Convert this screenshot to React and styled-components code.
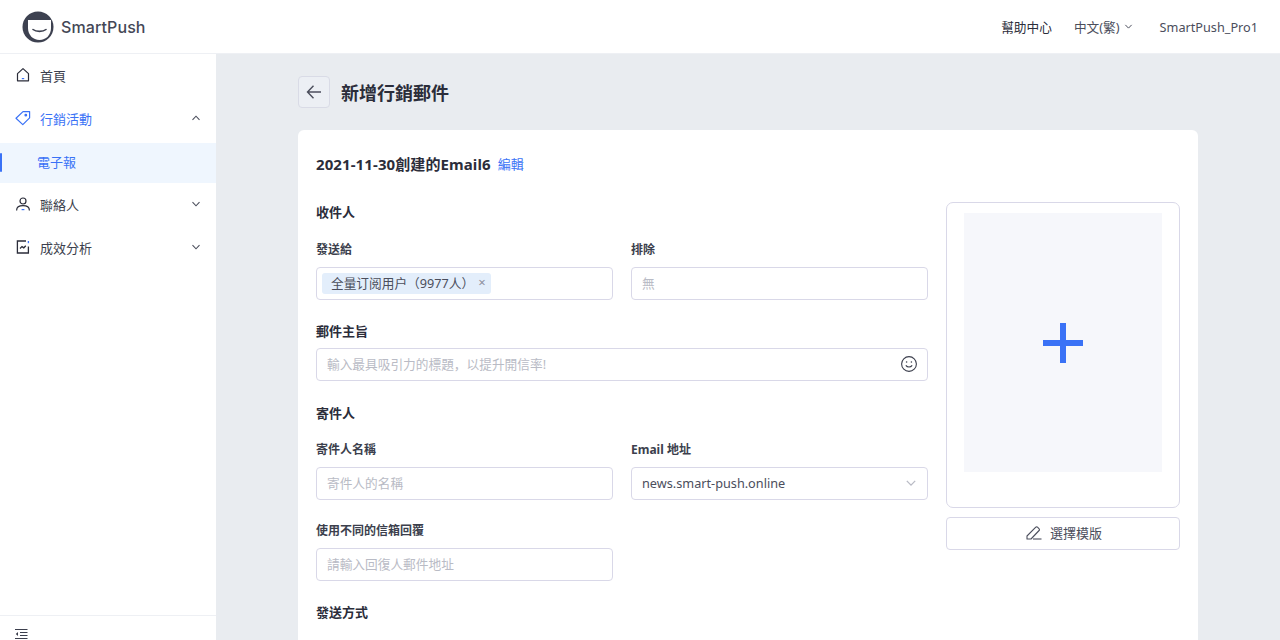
import React from "react";
import styled, { createGlobalStyle } from "styled-components";

const Global = createGlobalStyle`
  html, body {
    margin: 0;
    height: 640px;
    overflow: hidden;
    background: #e9ecf0;
    font-family: "Noto Sans", "Noto Sans CJK SC", sans-serif;
    color: #2b2d3a;
  }
  * { box-sizing: border-box; }
`;

const Header = styled.header`
  height: 54px;
  background: #fff;
  border-bottom: 1px solid #eef0f4;
  display: flex;
  align-items: center;
  justify-content: space-between;
  padding: 0 22px;
`;

const Brand = styled.div`
  display: flex;
  align-items: center;
  gap: 7px;
  font-family: Inter, sans-serif;
  font-size: 16px;
  font-weight: 500;
  letter-spacing: 0.1px;
  color: #444756;
`;

const TopNav = styled.nav`
  display: flex;
  align-items: center;
  font-size: 12.7px;
  color: #4b4e5c;
`;

const TopLink = styled.span`
  display: flex;
  align-items: center;
  gap: 4px;
  margin-left: ${(p) => p.$gap || 0}px;
  color: ${(p) => (p.$dark ? "#2b2d3a" : "#4b4e5c")};
`;

const Body = styled.div`
  display: flex;
  height: 586px;
`;

const Sidebar = styled.aside`
  width: 216px;
  flex: none;
  background: #fff;
  display: flex;
  flex-direction: column;
  padding-top: 3px;
`;

const Menu = styled.ul`
  list-style: none;
  margin: 0;
  padding: 0;
  flex: 1;
  display: flex;
  flex-direction: column;
  gap: 3px;
`;

const MenuItem = styled.li`
  position: relative;
  height: 40px;
  display: flex;
  align-items: center;
  gap: 9px;
  padding: 0 15px 4px;
  font-size: 13px;
  color: ${(p) => (p.$active ? "#3a72f6" : "#3c3f4d")};
  background: ${(p) => (p.$selected ? "#eff6fe" : "transparent")};
  padding-left: ${(p) => (p.$selected ? "37px" : "15px")};

  ${(p) => p.$selected && `
    &::before {
      content: "";
      position: absolute;
      left: 0;
      top: 10px;
      width: 2px;
      height: 19px;
      border-radius: 1px;
      background: #3a72f6;
    }
  `}
`;

const MenuLabel = styled.span`
  flex: 1;
`;

const SideFooter = styled.div`
  height: 25px;
  display: flex;
  align-items: flex-start;
  border-top: 1px solid #eef0f4;
  padding: 13px 0 0 15px;
  overflow: hidden;
`;

const Main = styled.main`
  flex: 1;
  padding: 22px 82px 0;
  overflow: hidden;
`;

const PageHead = styled.div`
  display: flex;
  align-items: center;
  gap: 11px;
  margin-bottom: 22px;
`;

const BackButton = styled.button`
  width: 32px;
  height: 32px;
  padding: 0;
  display: flex;
  align-items: center;
  justify-content: center;
  background: #eceff4;
  border: 1px solid #d9dbe6;
  border-radius: 4px;
`;

const PageTitle = styled.h1`
  margin: 0;
  font-size: 18px;
  font-weight: 700;
  color: #2b2d3a;
`;

const Card = styled.section`
  background: #fff;
  border-radius: 6px 6px 0 0;
  padding: 23px 18px 0;
  height: 520px;
`;

const EmailName = styled.div`
  display: flex;
  align-items: center;
  gap: 7px;
  height: 20px;
  font-size: 15px;
  font-weight: 700;
  letter-spacing: 0.1px;
  margin-bottom: 29px;
`;

const EditLink = styled.a`
  font-size: 13px;
  font-weight: 400;
  letter-spacing: 0;
  color: #3a72f6;
`;

const Columns = styled.div`
  display: grid;
  grid-template-columns: 612px 234px;
  column-gap: 18px;
`;

const Form = styled.div`
  display: flex;
  flex-direction: column;
`;

const SectionTitle = styled.div`
  height: 20px;
  line-height: 20px;
  font-size: 13px;
  font-weight: 700;
  margin-top: ${(p) => p.$top || 0}px;
  margin-bottom: ${(p) => p.$bottom || 0}px;
`;

const Row = styled.div`
  display: grid;
  grid-template-columns: 297px 297px;
  column-gap: 18px;
`;

const Label = styled.div`
  height: 18px;
  line-height: 20px;
  font-size: 12px;
  font-weight: 700;
  color: #3c3f4d;
  margin-top: ${(p) => p.$top || 0}px;
  margin-bottom: 9px;
`;

const InputBox = styled.div`
  height: 33px;
  display: flex;
  align-items: center;
  justify-content: space-between;
  padding: 0 10px 2px;
  background: #fff;
  border: 1px solid #d9d8e8;
  border-radius: 4px;
  font-size: 12.7px;
  color: ${(p) => (p.$filled ? "#4b4e5c" : "#b9bbc5")};
`;

const TagBox = styled(InputBox)`
  justify-content: flex-start;
  padding: 0 5px;
`;

const Tag = styled.span`
  height: 21px;
  display: flex;
  align-items: center;
  gap: 4px;
  padding: 0 5px 2px 9px;
  border-radius: 3px;
  background: #e3eefb;
  color: #4b4e5c;
  font-size: 12.7px;
`;

const TagClose = styled.span`
  color: #8d909c;
  font-size: 13px;
  line-height: 1;
`;

const Preview = styled.aside`
  display: flex;
  flex-direction: column;
  gap: 9px;
`;

const PreviewFrame = styled.div`
  height: 306px;
  padding: 10px 17px 0;
  border: 1px solid #d9d8e8;
  border-radius: 7px;
`;

const PreviewSheet = styled.div`
  height: 259px;
  background: #f6f7fb;
  display: flex;
  align-items: center;
  justify-content: center;
`;

const TemplateButton = styled.button`
  height: 33px;
  display: flex;
  align-items: center;
  justify-content: center;
  gap: 8px;
  padding: 0 0 2px 2px;
  background: #fff;
  border: 1px solid #d9d8e8;
  border-radius: 4px;
  font: inherit;
  font-size: 13px;
  color: #4b4e5c;
`;

const Chevron = ({ up, size = 10, color = "#4b4e5c" }) => (
  <svg width={size} height={size} viewBox="0 0 10 10" fill="none" stroke={color} strokeWidth="1.1">
    <path d={up ? "M1.5 6.8 5 3.2l3.5 3.6" : "M1.5 3.2 5 6.8l3.5-3.6"} />
  </svg>
);

const Logo = () => (
  <svg width="32" height="32" viewBox="0 0 32 32">
    <circle cx="16" cy="16" r="15.5" fill="#3d4150" />
    <path d="M6 9h23v8c0 7-5 12-11.5 12S6 24 6 17z" fill="#fff" />
    <path d="M11 18.5c3 2.5 10 2.5 13 0" fill="none" stroke="#3d4150" strokeWidth="1.6" strokeLinecap="round" />
  </svg>
);

const HomeIcon = () => (
  <svg width="16" height="16" viewBox="0 0 16 16" fill="none" stroke="#2b2d3a" strokeWidth="1.2" strokeLinejoin="round">
    <path d="M8 1.6 2.5 6.6v7.2h11V6.6z" />
    <path d="M6.8 11.6h2.4" stroke="#3a72f6" />
  </svg>
);

const TagIcon = () => (
  <svg width="16" height="16" viewBox="0 0 16 16" fill="none" stroke="#3a72f6" strokeWidth="1.2" strokeLinejoin="round">
    <path d="M1 8.2 8 1.6h6.6v6.2L7.8 14.6z" />
    <circle cx="10.8" cy="5.2" r=".8" fill="#3a72f6" />
  </svg>
);

const UserIcon = () => (
  <svg width="16" height="16" viewBox="0 0 16 16" fill="none" stroke="#2b2d3a" strokeWidth="1.2">
    <circle cx="8" cy="5" r="3" />
    <path d="M1.6 14.4c0-3 2.6-4.8 6.4-4.8s6.4 1.8 6.4 4.8" />
    <path d="M6.6 13.6h2.8" stroke="#3a72f6" />
  </svg>
);

const ChartIcon = () => (
  <svg width="16" height="16" viewBox="0 0 16 16" fill="none" stroke="#2b2d3a" strokeWidth="1.3">
    <path d="M11 2H2.4v12h11V7.4" />
    <path d="M5 9.4 7 7.6l1.8 1.2 2-2" />
    <path d="M13.4 2v2.2" stroke="#3a72f6" />
  </svg>
);

const CollapseIcon = () => (
  <svg width="13" height="10" viewBox="0 0 13 10" fill="none" stroke="#3c3f4d" strokeWidth="1">
    <path d="M0 .5h12.5M5 3.5h7.5M5 6.5h7.5M0 9.5h12.5" />
    <path d="M3 3v4L.8 5z" fill="#3c3f4d" stroke="none" />
  </svg>
);

const BackIcon = () => (
  <svg width="16" height="16" viewBox="0 0 16 16" fill="none" stroke="#4b4e5c" strokeWidth="1.4">
    <path d="M15 8H1.5M7.5 1.8 1.5 8l6 6.2" />
  </svg>
);

const SmileIcon = () => (
  <svg width="16" height="16" viewBox="0 0 16 16" fill="none" stroke="#3c3f4d" strokeWidth="1.1">
    <circle cx="8" cy="8" r="7.4" />
    <path d="M4.8 9.4c1.6 2.2 4.8 2.2 6.4 0" />
    <circle cx="5.6" cy="6" r=".8" fill="#3c3f4d" stroke="none" />
    <circle cx="10.4" cy="6" r=".8" fill="#3c3f4d" stroke="none" />
  </svg>
);

const PlusIcon = () => (
  <svg width="40" height="40" viewBox="0 0 40 40" fill="#3a72f6">
    <path d="M17 0h6v17h17v6H23v17h-6V23H0v-6h17z" />
  </svg>
);

const PenIcon = () => (
  <svg width="16" height="16" viewBox="0 0 16 16" fill="none" stroke="#4b4e5c" strokeWidth="1.1" strokeLinejoin="round">
    <path d="M1 14V11L9.8 2.2a1.2 1.2 0 0 1 1.7 0l1.6 1.6a1.2 1.2 0 0 1 0 1.7L5 14z" />
    <path d="M7 14h8.5" />
  </svg>
);

export default function App() {
  return (
    <>
      <Global />
      <Header>
        <Brand>
          <Logo />
          SmartPush
        </Brand>
        <TopNav>
          <TopLink $dark>幫助中心</TopLink>
          <TopLink $gap={22}>
            中文(繁)
            <Chevron size={9} />
          </TopLink>
          <TopLink $gap={27}>SmartPush_Pro1</TopLink>
        </TopNav>
      </Header>
      <Body>
        <Sidebar>
          <Menu>
            <MenuItem>
              <HomeIcon />
              <MenuLabel>首頁</MenuLabel>
            </MenuItem>
            <MenuItem $active>
              <TagIcon />
              <MenuLabel>行銷活動</MenuLabel>
              <Chevron up />
            </MenuItem>
            <MenuItem $active $selected>
              <MenuLabel>電子報</MenuLabel>
            </MenuItem>
            <MenuItem>
              <UserIcon />
              <MenuLabel>聯絡人</MenuLabel>
              <Chevron />
            </MenuItem>
            <MenuItem>
              <ChartIcon />
              <MenuLabel>成效分析</MenuLabel>
              <Chevron />
            </MenuItem>
          </Menu>
          <SideFooter>
            <CollapseIcon />
          </SideFooter>
        </Sidebar>
        <Main>
          <PageHead>
            <BackButton>
              <BackIcon />
            </BackButton>
            <PageTitle>新增行銷郵件</PageTitle>
          </PageHead>
          <Card>
            <EmailName>
              2021-11-30創建的Email6
              <EditLink>編輯</EditLink>
            </EmailName>
            <Columns>
              <Form>
                <SectionTitle $bottom={18}>收件人</SectionTitle>
                <Row>
                  <div>
                    <Label>發送給</Label>
                    <TagBox>
                      <Tag>
                        全量订阅用户（9977人）
                        <TagClose>×</TagClose>
                      </Tag>
                    </TagBox>
                  </div>
                  <div>
                    <Label>排除</Label>
                    <InputBox>無</InputBox>
                  </div>
                </Row>
                <SectionTitle $top={21} $bottom={7}>郵件主旨</SectionTitle>
                <InputBox>
                  輸入最具吸引力的標題，以提升開信率!
                  <SmileIcon />
                </InputBox>
                <SectionTitle $top={22} $bottom={17}>寄件人</SectionTitle>
                <Row>
                  <div>
                    <Label>寄件人名稱</Label>
                    <InputBox>寄件人的名稱</InputBox>
                  </div>
                  <div>
                    <Label>Email 地址</Label>
                    <InputBox $filled>
                      news.smart-push.online
                      <Chevron size={12} color="#b9bbc5" />
                    </InputBox>
                  </div>
                </Row>
                <Row>
                  <div>
                    <Label $top={21}>使用不同的信箱回覆</Label>
                    <InputBox>請輸入回復人郵件地址</InputBox>
                  </div>
                </Row>
                <SectionTitle $top={21}>發送方式</SectionTitle>
              </Form>
              <Preview>
                <PreviewFrame>
                  <PreviewSheet>
                    <PlusIcon />
                  </PreviewSheet>
                </PreviewFrame>
                <TemplateButton>
                  <PenIcon />
                  選擇模版
                </TemplateButton>
              </Preview>
            </Columns>
          </Card>
        </Main>
      </Body>
    </>
  );
}
